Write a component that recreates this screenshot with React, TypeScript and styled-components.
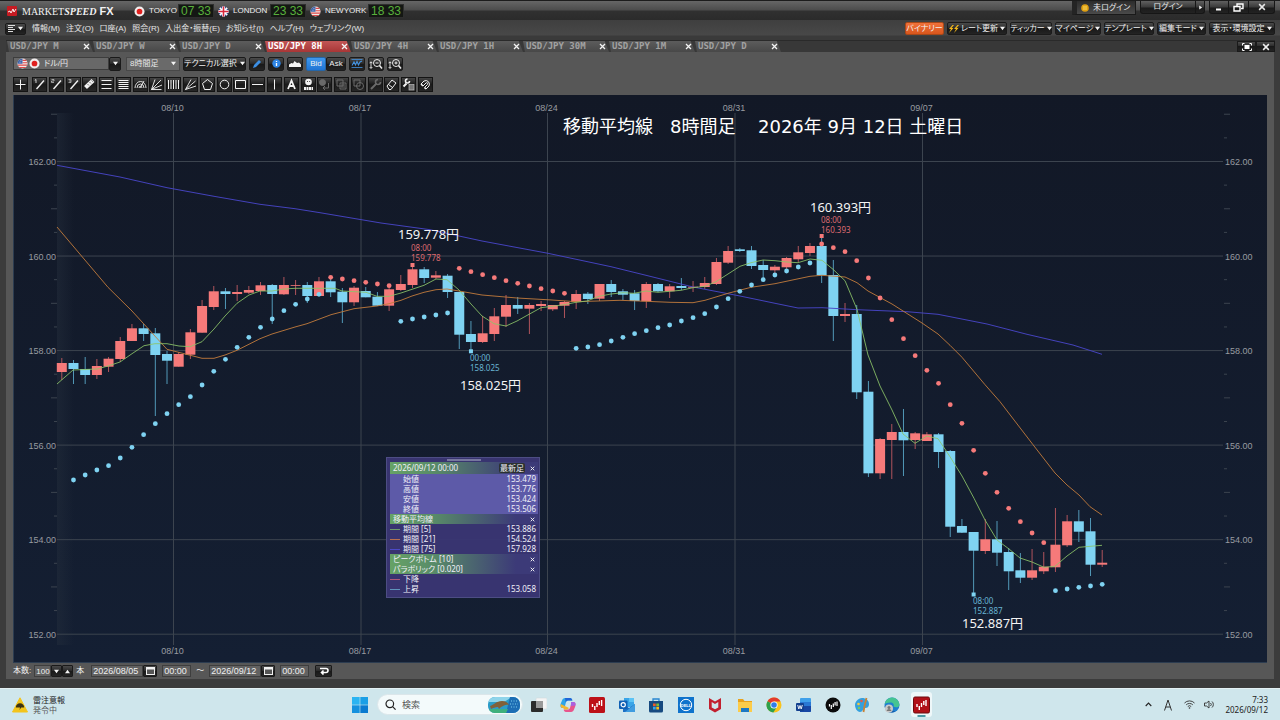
import React from "react";
import styled, { createGlobalStyle, css } from "styled-components";

const GlobalStyle = createGlobalStyle`
  * { box-sizing: border-box; }
  html, body { margin: 0; padding: 0; background: #2b2b2b; }
  body { font-family: "Noto Sans", "Noto Sans CJK JP", sans-serif; font-size: 8px; line-height: 10px; color: #e8e8e8; }
  button, input, select { font: inherit; color: inherit; margin: 0; padding: 0; border: 0; background: none; border-radius: 0; }
  button { cursor: pointer; }
  svg { display: block; flex: none; }
`;

const uiFont = css`
  font-family: "Liberation Sans", "Noto Sans CJK JP", sans-serif;
  font-feature-settings: "palt";
`;

const Screen = styled.div`
  display: flex;
  flex-direction: column;
  min-height: 100vh;
`;

const AppWindow = styled.main`
  ${uiFont}
  flex: 1;
  display: flex;
  flex-direction: column;
  background: #3c3c3c;
  white-space: nowrap;
`;

/* ---------- title bar ---------- */

const TitleBar = styled.header`
  height: 20px;
  display: flex;
  justify-content: space-between;
  align-items: flex-start;
  padding: 0 5px 0 7px;
  border-top: 1px solid #1c1c1c;
  background: linear-gradient(#666 0, #4c4c4c 9px, #303030 10px, #2b2b2b 19px);
`;

const Brand = styled.div`
  display: flex;
  align-items: center;
  height: 20px;
`;

const BrandName = styled.h1`
  width: 112px;
  margin: 0 0 0 5px;
  font: 10px/12px "Liberation Serif", serif;
  color: #f2f2f2;
  em { font-weight: 700; }
  strong { margin-left: 3px; font: 700 11px/12px "Liberation Sans", sans-serif; }
`;

const City = styled.div<{ $w: number }>`
  display: flex;
  align-items: center;
  width: ${(p) => p.$w}px;
  font: 8px/12px "Liberation Sans", sans-serif;
  color: #f0f0f0;
  svg { margin-right: 4px; }
`;

const Clock = styled.time`
  width: 36px;
  height: 14px;
  margin: 0 4px 0 auto;
  background: #141713;
  border: 1px solid #2e2e2e;
  color: #58b03c;
  font: 12px/12px "Liberation Sans", sans-serif;
  text-align: center;
`;

const TitleControls = styled.div`
  display: flex;
  gap: 4px;
`;

const LoginState = styled.div`
  display: flex;
  align-items: center;
  gap: 4px;
  width: 64px;
  height: 14px;
  padding-left: 4px;
  background: linear-gradient(#2c2c2c, #4a4a4a);
  border: 1px solid #1a1a1a;
  border-left: 5px solid #242424;
  border-top: 0;
`;

const GlossGroup = styled.div`
  display: flex;
  height: 13px;
  border: 1px solid #161616;
  border-top: 0;
  border-radius: 0 0 3px 3px;
  background: linear-gradient(#606060 0, #3a3a3a 6px, #1b1b1b 7px, #242424 13px);
`;

const GlossButton = styled.button<{ $w: number }>`
  display: flex;
  align-items: center;
  justify-content: center;
  width: ${(p) => p.$w}px;
  & + & { border-left: 1px solid #161616; }
`;

/* ---------- menu bar ---------- */

const MenuBar = styled.nav`
  height: 20px;
  display: flex;
  align-items: center;
  padding: 0 5px 3px 5px;
  background: linear-gradient(#3f3f3f, #484848 15px, #3a3a3a 16px);
`;

const darkButton = css`
  display: flex;
  align-items: center;
  justify-content: center;
  border: 1px solid #1a1a1a;
  border-radius: 2px;
  background: linear-gradient(#4a4a4a, #2c2c2c 45%, #181818 50%, #242424);
  color: #f0f0f0;
`;

const MainMenuButton = styled.button`
  ${darkButton}
  width: 21px;
  height: 12px;
  gap: 2px;
  margin-right: 6px;
`;

const MenuItem = styled.button`
  margin-right: 6px;
  color: #e6e6e6;
`;

const Actions = styled.div`
  display: flex;
  gap: 3px;
  margin-left: auto;
`;

const ActionButton = styled.button<{ $w: number; $hot?: boolean }>`
  ${darkButton}
  gap: 2px;
  width: ${(p) => p.$w}px;
  height: 13px;
  ${(p) => p.$hot && css`background: linear-gradient(#f0713a, #d9561c); border-color: #a84818;`}
`;

/* ---------- tabs ---------- */

const TabStrip = styled.div`
  height: 12px;
  display: flex;
  align-items: flex-end;
  margin: 0 5px 0 6px;
  padding-left: 1px;
  border-top: 1px solid #2a2a2a;
  background: #383838;
`;

const Tab = styled.div<{ $active?: boolean }>`
  display: flex;
  align-items: center;
  justify-content: space-between;
  width: 86px;
  height: 11px;
  padding: 0 3px;
  clip-path: polygon(0 0, 95% 0, 100% 100%, 2px 100%);
  background: ${(p) => (p.$active ? "linear-gradient(#c25656, #a83636)" : "linear-gradient(#5c5c5c, #484848)")};
  color: ${(p) => (p.$active ? "#fff" : "#a2a2a2")};
`;

const TabLabel = styled.button`
  font: 700 9px/11px "DejaVu Sans Mono", monospace;
`;

const TabClose = styled.button`
  display: flex;
  color: #f4f4f4;
`;

const PaneControls = styled.div`
  display: flex;
  margin-left: auto;
  button { ${darkButton} width: 19px; height: 11px; border-radius: 0; }
`;

/* ---------- content ---------- */

const Content = styled.section`
  flex: 1;
  display: flex;
  flex-direction: column;
  margin: 0 6px 9px;
  padding: 0 7px;
  background: #575757;
`;

const Toolbar = styled.div`
  height: 23px;
  display: flex;
  align-items: center;
  gap: 3px;
`;

const PairBox = styled.label`
  display: flex;
  align-items: center;
  gap: 1px;
  width: 96px;
  height: 13px;
  padding-left: 3px;
  border: 1px solid #3d3d3d;
  background: #686868;
`;

const PlainSelect = styled.select`
  appearance: none;
  flex: 1;
  padding-left: 3px;
  line-height: 11px;
  outline: none;
`;

const FrameBox = styled.label`
  display: flex;
  align-items: center;
  width: 54px;
  height: 14px;
  margin-left: 2px;
  padding-right: 3px;
  border: 1px solid #484848;
  background: #6a6a6a;
`;

const Button = styled.button<{ $w?: number; $on?: boolean }>`
  ${darkButton}
  gap: 3px;
  width: ${(p) => p.$w ?? 16}px;
  height: 14px;
  ${(p) => p.$on && css`background: linear-gradient(#3f98ee, #1f74d4); border-color: #2566a8;`}
`;

const Segment = styled.div`
  display: flex;
`;

const DrawBar = styled.div`
  height: 20px;
  display: flex;
  align-items: center;
  gap: 4px;
  padding-bottom: 1px;
`;

const DrawGroup = styled.div`
  display: flex;
  justify-content: space-between;
  width: 401px;
`;

const ToolButton = styled.button<{ $dim?: boolean }>`
  display: flex;
  align-items: center;
  justify-content: center;
  width: 15px;
  height: 15px;
  border: 1px solid #141414;
  background: linear-gradient(#454545, #1a1a1a 50%, #262626);
  color: ${(p) => (p.$dim ? "#6a6a6a" : "#f2f2f2")};
`;

const ChartPanel = styled.div`
  position: relative;
  flex: 1;
  display: flex;
  background: linear-gradient(#121826, #141f33);
  border-left: 1px solid #2c3c50;
  border-bottom: 1px solid #2c3c50;
  svg.chart { flex: 1; min-width: 0; width: 100%; height: auto; }
`;

const FooterBar = styled.form`
  height: 16px;
  display: flex;
  align-items: center;
  color: #f0f0f0;
`;

const Field = styled.input<{ $w: number; $small?: boolean }>`
  width: ${(p) => p.$w}px;
  height: 12px;
  padding-left: 1px;
  border: 1px solid #3e3e3e;
  background: #626262;
  font: ${(p) => (p.$small ? 8 : 9)}px/10px "Liberation Sans", sans-serif;
  outline: none;
`;

const SmallButton = styled.button<{ $w: number }>`
  ${darkButton}
  width: ${(p) => p.$w}px;
  height: 12px;
  border-radius: 1px;
`;

const Gap = styled.span<{ $l?: number; $r?: number }>`
  margin: 0 ${(p) => p.$r ?? 0}px 0 ${(p) => p.$l ?? 0}px;
`;

/* ---------- floating data window ---------- */

const DataWindow = styled.aside`
  position: absolute;
  left: 372px;
  top: 362px;
  width: 154px;
  padding: 1px 1px 3px 3px;
  border: 1px solid #4d4d84;
  background: rgba(58, 54, 116, 0.95);
  color: #f0f0f8;
  font: 8px/10px "Noto Sans", "Noto Sans CJK JP", sans-serif;
  font-feature-settings: "palt";
`;

const Handle = styled.div`
  width: 34px;
  height: 2px;
  margin: 0 auto 1px;
  background: #77779f;
`;

const DataTable = styled.table`
  width: 100%;
  border-collapse: collapse;
  th, td { padding: 0; height: 10px; font-weight: 400; text-align: left; }
  td:last-child { text-align: right; padding-right: 2px; }
`;

const SectionRow = styled.tr<{ $h?: number }>`
  background: linear-gradient(90deg, #66a266 0, #588b68 30%, #3c3a78 85%);
  th { height: ${(p) => p.$h ?? 10}px; }
`;

const SectionHead = styled.div`
  display: flex;
  align-items: center;
  justify-content: space-between;
  padding: 0 3px;
`;

const Latest = styled.span`
  margin: 0 5px 0 auto;
  padding: 0 1px;
  border-radius: 2px;
  background: #2c3230;
`;

const PriceRow = styled.tr<{ $lit?: boolean }>`
  background: ${(p) => (p.$lit ? "#5d5aa8" : "transparent")};
`;

const Swatch = styled.span<{ $c: string }>`
  display: block;
  width: 10px;
  height: 1px;
  background: ${(p) => p.$c};
`;

/* ---------- task bar ---------- */

const TaskBar = styled.footer`
  height: 32px;
  display: grid;
  grid-template-columns: 1fr auto 1fr;
  align-items: center;
  padding: 0 12px;
  border-top: 1px solid #e4f1f4;
  background: #cfe6ec;
  color: #222;
  white-space: nowrap;
`;

const Weather = styled.div`
  display: flex;
  align-items: center;
  gap: 5px;
  small { display: block; font-size: 8px; color: #555; }
`;

const TaskCenter = styled.div`
  display: flex;
  align-items: center;
  margin-left: 4px;
`;

const SearchBox = styled.label`
  display: flex;
  align-items: center;
  gap: 6px;
  width: 146px;
  height: 21px;
  margin: 0 5px 0 9px;
  padding: 0 2px 0 7px;
  border: 1px solid #dbe6ea;
  border-radius: 11px;
  background: #f3fafb;
  input { flex: 1; min-width: 0; font-size: 9px; outline: none; }
  input::placeholder { color: #555; opacity: 1; }
`;

const TaskIcons = styled.div`
  display: flex;
  justify-content: space-between;
  width: 404px;
`;

const TaskButton = styled.button<{ $active?: boolean }>`
  display: flex;
  flex-direction: column;
  align-items: center;
  justify-content: center;
  width: 21px;
  height: 25px;
  border-radius: 3px;
  background: ${(p) => (p.$active ? "#eef7f9" : "transparent")};
`;

const Tray = styled.div`
  display: flex;
  align-items: center;
  justify-content: flex-end;
  gap: 9px;
`;

const TrayClock = styled.time`
  margin-left: 2px;
  text-align: right;
  font: 8px/10px "Noto Sans", sans-serif;
`;

/* ---------- chart data ---------- */

type Candle = [kind: "u" | "d", high: number, top: number, bottom: number, low: number];

const candles: Candle[] = [
  ["u", 358, 363, 372, 380], ["d", 360, 363, 369, 384], ["d", 357, 369, 375, 384], ["u", 359, 366, 375, 379],
  ["u", 357, 358.7, 366.7, 372], ["u", 337, 341, 359, 362], ["u", 324, 328.3, 341, 341], ["d", 324, 328.3, 334, 341],
  ["d", 328, 333.3, 355, 416], ["d", 351, 354, 360.7, 384], ["u", 352, 354, 366.7, 366.7], ["u", 329, 332.3, 354.7, 359],
  ["u", 300, 306, 332.7, 332.7], ["u", 286, 291.3, 307, 310], ["d", 288, 291.3, 294, 309], ["u", 285, 292, 294, 301],
  ["u", 286, 290, 292.7, 294], ["u", 282, 285.3, 291, 295], ["d", 284, 285, 294, 324], ["u", 277, 285, 294.3, 295],
  ["u", 280, 285, 285.8, 295], ["d", 282, 285, 296, 303], ["u", 277, 281.3, 296, 296], ["d", 278, 281.3, 292.3, 297],
  ["d", 288, 291.7, 302.3, 323], ["u", 286, 287.7, 302.3, 306], ["d", 287, 291, 297.3, 297.3], ["d", 292, 296.7, 305.7, 306],
  ["u", 287, 289.3, 305.7, 311], ["u", 275, 284, 290, 291], ["u", 263, 269.3, 285, 288], ["d", 267, 269.3, 278, 283],
  ["u", 271, 275.3, 277.7, 279], ["d", 274, 275.7, 292, 298], ["d", 292, 292, 334.7, 349], ["d", 321, 334, 342, 350],
  ["u", 316, 333.3, 342, 343], ["u", 308, 316.3, 334, 341], ["u", 295, 305, 316.7, 327], ["d", 297, 305, 308.7, 314],
  ["u", 303, 305, 308.7, 334], ["u", 301, 304, 306, 311], ["u", 305, 305, 309.3, 311], ["u", 301, 302, 305.7, 318],
  ["u", 290, 294, 302, 309], ["d", 292, 293.7, 299, 304], ["u", 284, 284, 298.7, 301], ["d", 280, 284, 292, 297],
  ["d", 289, 291.3, 294.7, 300], ["d", 290, 293.3, 301, 310], ["u", 282, 284, 301.3, 308], ["d", 283, 284, 291.3, 292],
  ["u", 284, 286.3, 291.3, 298], ["d", 278, 286, 288, 290], ["u", 281, 286.7, 287.7, 292], ["u", 277, 283, 287, 289],
  ["u", 258, 262, 284, 285], ["u", 246, 251, 262.7, 264], ["d", 248, 249.3, 251, 252], ["d", 246, 250.3, 266, 269],
  ["d", 260, 265, 270, 279], ["u", 265, 266.7, 270.3, 273], ["u", 257, 258, 267.3, 271], ["u", 246, 252.3, 259.3, 262],
  ["u", 243, 246, 253, 256], ["d", 237, 246, 275.3, 283], ["d", 260, 275, 316, 341], ["u", 303, 314, 316, 322],
  ["d", 305, 314, 392.3, 399], ["d", 381, 391.7, 473.3, 477], ["u", 438, 439, 473.3, 479], ["u", 424, 432, 440, 479],
  ["d", 409, 432, 440.3, 476], ["u", 432, 433.3, 440, 449], ["u", 432, 434.3, 441, 441], ["d", 433, 434.3, 452, 468],
  ["d", 450, 451, 526.7, 537], ["d", 519, 526, 532.7, 533], ["d", 532, 532, 550.7, 593], ["u", 519, 539.3, 551, 554],
  ["d", 521, 539.3, 552.7, 566], ["d", 548, 552, 571.3, 590], ["d", 553, 570.3, 577.7, 583], ["u", 549, 570.3, 577.7, 580],
  ["u", 552, 566.7, 571.3, 574], ["u", 508, 544.7, 567.3, 572], ["u", 515, 521.3, 545.3, 547], ["d", 510, 521.3, 531.7, 542],
  ["d", 518, 531.3, 564.7, 576], ["u", 550, 562.7, 564.7, 567],
];

type SarRun = { from: number; side: "u" | "d"; ys: number[] };

const parabolic: SarRun[] = [
  { from: 1, side: "d", ys: [480, 475, 470, 465.7, 458, 447.3, 434.7, 423.7, 413.7, 404.7, 396.7, 385, 371.3, 359.3, 347.3, 337.3, 327.3, 319, 310.7, 304.3, 299, 294.3] },
  { from: 23, side: "u", ys: [277.3, 279, 280.7, 282.3, 284, 285.7] },
  { from: 29, side: "d", ys: [321.3, 319, 317, 315, 313] },
  { from: 34, side: "u", ys: [268.3, 271.7, 274.7, 277.7, 280.7, 283.3, 286, 288.7, 291, 293.3] },
  { from: 44, side: "d", ys: [348.3, 347, 344.7, 341, 337.3, 333.7, 330.7, 327.7, 325, 321, 317.7, 313.7, 307, 298.7, 291.3, 285, 279.7, 275, 271, 267, 263] },
  { from: 65, side: "u", ys: [244, 247.7, 251.7, 260.7, 278, 298, 319.7, 338.7, 355.7, 370.3, 383.3, 404.7, 423.3, 450.3, 473.3, 492.3, 508.3, 521.7, 533, 542.7] },
  { from: 85, side: "d", ys: [590.7, 589, 587.3, 586, 584.3] },
];

const ma5 =
  "57,384 73,370 97,369 108,366 120,362 132,353.7 144,345.7 155,343.7 167,343.7 179,346 190,346.7 202,341.7 214,329 225,316 237,303.3 249,295 260,291 272,291 284,289 295,288.3 335,288.3 342,291 366,292.3 377,296.3 389,296.3 401,293 412,289.3 424,285.3 436,279 447,279.7 459,290 471,304 482,316 494,323.7 506,326 517,321 529,314.3 541,307.7 552,306.3 564,304.7 576,302.3 587,301 599,296.3 611,294 623,292.7 634,293.3 646,291 658,292.3 681,290.3 693,287.7 705,286.3 716,281.7 728,274 740,266.3 751,262.7 763,260 775,260.7 787,262 798,262.7 810,259 822,260.3 833,269.3 845,280.7 857,309.3 868,355 880,386 892,410 903,434 915,443.3 927,436 938,438.7 950,456.7 962,476 974,498.3 985,520 997,540 1009,549 1020,558 1032,562 1044,567.3 1055,566.3 1067,556 1079,547.3 1102,545.3";
const ma21 =
  "57,227 108,287.3 132,311 167,349.3 202,358.3 214,358.3 225,355 237,350.3 260,338.7 272,334 295,327 307,323.7 331,314.7 354,308.7 377,306 389,303.7 401,300.3 412,296 424,292.3 436,289.7 447,289 459,291 482,295 517,298 552,300 576,301.7 620,300.3 646,301.3 670,302.3 693,302.7 705,300.3 728,293.3 751,287.3 775,283.7 810,276.3 822,275.3 845,277 857,282.7 868,291 892,304 922,323 938,334 950,345.3 962,357.3 985,384.7 1000,401.7 1033,444.7 1055,473 1067,485 1079,495 1090,506.7 1102,515";
const ma75 =
  "57,165.3 120,177 167,187.7 214,196.3 260,204.3 295,208.7 320,212.7 381,223 430,229.7 482,241 548,253.3 611,266.7 646,275.3 693,287 740,296 775,303.3 798,308 822,307.7 857,309.7 907,311.7 938,314.3 987,324 1027,334.3 1073,345 1102,354.3";

const weeks: [string, number][] = [["08/10", 173.5], ["08/17", 361], ["08/24", 547.5], ["08/31", 735], ["09/07", 922.5]];

const priceY = (p: number) => 161.5 + (162 - p) * 47.27;
const candleX = (i: number) => 61.8 + i * 11.69;
const prices = [162, 160, 158, 156, 154, 152];
const ticks = Array.from({ length: 22 }, (_, i) => 163 - i * 0.5).filter((p) => p % 2 !== 0 && p > 152);

const body = { u: "#f67a7a", d: "#7fd3f2" };
const wick = { u: "#b0545c", d: "#5299b8" };

const extremes = [
  { i: 30, y: 265, kind: "u", tx: 411, ty: 251, time: "08:00", price: "159.778", nx: 398, ny: 239 },
  { i: 35, y: 351.3, kind: "d", tx: 470, ty: 361, time: "00:00", price: "158.025", nx: 460, ny: 390 },
  { i: 65, y: 236, kind: "u", tx: 821, ty: 223, time: "08:00", price: "160.393", nx: 810, ny: 212 },
  { i: 78, y: 594.5, kind: "d", tx: 973, ty: 604, time: "08:00", price: "152.887", nx: 962, ny: 628 },
] as const;

const noto = '"Noto Sans", "Noto Sans CJK JP", sans-serif';
const wide = '"DejaVu Sans", "Noto Sans CJK JP", sans-serif';
const axis = { fill: "#989ba0", fontSize: 9, fontFamily: '"Liberation Sans", sans-serif' };

function Chart() {
  return (
    <svg className="chart" viewBox="14 95 1253 567" role="img" aria-label="USD/JPY 8H">
      <defs>
        <linearGradient id="edge"><stop offset="0" stopColor="#26303e" stopOpacity=".45" /><stop offset="1" stopColor="#26303e" stopOpacity="0" /></linearGradient>
      </defs>
      <rect x="57" y="113" width="17" height="532" fill="url(#edge)" />
      <g stroke="#3c444f">
        {prices.map((p) => <line key={p} x1="57" x2="1223" y1={priceY(p)} y2={priceY(p)} />)}
        {weeks.map(([d, x]) => <line key={d} x1={x} x2={x} y1="113" y2="645" />)}
        {ticks.map((p) => {
          const len = p % 1 === 0 ? 6 : 3;
          return (
            <g key={p}>
              <line x1={57 - len} x2="57" y1={priceY(p)} y2={priceY(p)} />
              <line x1="1224" x2={1224 + len} y1={priceY(p)} y2={priceY(p)} />
            </g>
          );
        })}
      </g>
      <g {...axis}>
        {prices.map((p) => (
          <g key={p}>
            <text x="56" y={priceY(p) + 3.5} textAnchor="end">{p.toFixed(2)}</text>
            <text x="1225" y={priceY(p) + 3.5}>{p.toFixed(2)}</text>
          </g>
        ))}
        {weeks.map(([d, x]) => (
          <g key={d} textAnchor="middle">
            <text x={x - 1} y="111">{d}</text>
            <text x={x - 1} y="654">{d}</text>
          </g>
        ))}
      </g>
      {candles.map(([k, h, t, b, l], i) => (
        <g key={i}>
          <line x1={candleX(i)} x2={candleX(i)} y1={h} y2={l} stroke={wick[k]} />
          <rect x={candleX(i) - 5} y={t} width="10" height={b - t} fill={body[k]} />
        </g>
      ))}
      <polyline points={ma75} fill="none" stroke="#4745c4" strokeOpacity=".95" />
      <polyline points={ma21} fill="none" stroke="#c27b3c" strokeOpacity=".9" />
      <polyline points={ma5} fill="none" stroke="#8cc468" strokeOpacity=".85" />
      {parabolic.map((run) =>
        run.ys.map((y, n) => <circle key={run.from + n} cx={candleX(run.from + n)} cy={y} r="2.4" fill={body[run.side]} />)
      )}
      {extremes.map((e) => (
        <g key={e.price} fontFamily={noto}>
          <rect x={candleX(e.i) - 2} y={e.y - 2} width="4" height="4" fill={body[e.kind]} />
          <g fontSize="8" fill={e.kind === "u" ? "#dd6a70" : "#68b4d2"}>
            <text x={e.tx} y={e.ty}>{e.time}</text>
            <text x={e.tx} y={e.ty + 10}>{e.price}</text>
          </g>
          <text x={e.nx} y={e.ny} fontSize="13" fill="#f4f4f4">{e.price}円</text>
        </g>
      ))}
      <g fontFamily={wide} fontSize="18" fill="#fff">
        <text x="563" y="133">移動平均線</text>
        <text x="670" y="133">8時間足</text>
        <text x="758" y="133">2026年 9月 12日 土曜日</text>
      </g>
    </svg>
  );
}

/* ---------- icons ---------- */

const Caret = ({ up, right }: { up?: boolean; right?: boolean }) => (
  <svg width="5" height="5" viewBox="0 0 6 5" fill="#f4f4f4" aria-hidden>
    <path d={up ? "M0 4.5h6L3 .5z" : right ? "M1.5 0v5L5 2.5z" : "M0 .5h6L3 4.5z"} />
  </svg>
);

const Cross = ({ s = 7 }: { s?: number }) => (
  <svg width={s} height={s} viewBox="0 0 7 7" stroke="currentColor" strokeWidth="1.3" aria-hidden><path d="M1 1l5 5M6 1L1 6" /></svg>
);

const FlagJP = () => (
  <svg width="11" height="11" viewBox="0 0 12 12" aria-hidden><circle cx="6" cy="6" r="5.5" fill="#f1eded" /><circle cx="6" cy="6" r="3.1" fill="#e0201f" /></svg>
);
const FlagUK = () => (
  <svg width="11" height="11" viewBox="0 0 12 12" aria-hidden>
    <circle cx="6" cy="6" r="5.5" fill="#324f9a" />
    <path d="M2 2l8 8M10 2l-8 8" stroke="#fff" strokeWidth="1.8" />
    <path d="M6 .5v11M.5 6h11" stroke="#fff" strokeWidth="3.2" />
    <path d="M6 .5v11M.5 6h11" stroke="#d8283c" strokeWidth="1.7" />
  </svg>
);
const FlagUS = () => (
  <svg width="11" height="11" viewBox="0 0 12 12" aria-hidden>
    <circle cx="6" cy="6" r="5.5" fill="#f3e9e9" />
    <path d="M6 2.6h4.2M6 5.2h5.2M1 7.8h10M2.6 10.3h6.8" stroke="#dc4a4a" strokeWidth="1.2" />
    <path d="M6 .5A5.5 5.5 0 0 0 .5 6.4H6z" fill="#3f64a8" />
    <path d="M2.2 4.6h3M3.4 2.7h2" stroke="#b9c9e6" strokeWidth=".7" strokeDasharray=".8 .6" />
  </svg>
);

const TitleLogo = () => (
  <svg width="10" height="10" viewBox="0 0 10 10" aria-hidden>
    <rect width="10" height="10" rx="1" fill="#c51b22" />
    <path d="M1 6l2-1 1 2 2-4 1 3 2-3" fill="none" stroke="#fff" strokeWidth=".9" />
  </svg>
);

const Glyph = ({ children }: { children: React.ReactNode }) => (
  <svg width="13" height="13" viewBox="0 0 13 13" fill="none" stroke="currentColor" strokeWidth="1" aria-hidden>{children}</svg>
);

const tools: { name: string; dim?: boolean; art: React.ReactNode }[] = [
  { name: "線1", art: <><path d="M3.500 11L11 2.500" strokeWidth="1.4" /><path d="M1.800 2.300l1.200-.8v3.500" strokeWidth=".8" /></> },
  { name: "線2", art: <><path d="M3.500 11L11 2.500" strokeWidth="1.4" /><path d="M1.500 1.500h2.500v1.500h-2.500v1.500h2.500" strokeWidth=".7" opacity=".8" /></> },
  { name: "線3", art: <><path d="M3.500 11L11 2.500" strokeWidth="1.4" /><path d="M1.500 1.500h2.500v3h-2.500M2 3h2" strokeWidth=".7" opacity=".8" /></> },
  { name: "チャネル", art: <><path d="M2.500 9.500L10 2.500" strokeWidth="4.200" /><path d="M4.500 6l1.500 1.500M6.500 4l1.500 1.500M8.500 2.500l1.200 1.200" stroke="#444" strokeWidth=".7" /></> },
  { name: "水平三本", art: <path d="M1.500 2.500h10M1.500 6.500h10M1.500 10.500h10" /> },
  { name: "水平五本", art: <path d="M1.500 2.500h10M1.500 4.500h10M1.500 6.500h10M1.500 8.500h10M1.500 10.500h10" /> },
  { name: "アーク", art: <><path d="M1 10a5.500 6.500 0 0 1 11 0M3 10a3.500 4 0 0 1 7 0M5 10a1.500 1.800 0 0 1 3 0" strokeWidth=".9" /><path d="M6 10l4-7" strokeWidth=".9" /></> },
  { name: "ファン", art: <path d="M1.500 11.500L5 1.500M1.500 11.500L11 2M1.500 11.500L12 7M1.500 11.500h10" strokeWidth=".9" /> },
  { name: "垂直線群", art: <path d="M1.500 2v9M4 2v9M6.500 2v9M9 2v9M11.500 2v9" /> },
  { name: "角度", art: <path d="M1.500 11.500L7 1.500M1.500 11.500L11.500 3M1.500 11.500L12 8" strokeWidth=".9" /> },
  { name: "五角形", art: <path d="M6.500 1.500l5 4-2 6h-6l-2-6z" /> },
  { name: "円", art: <circle cx="6.500" cy="6.500" r="4.300" /> },
  { name: "四角形", art: <path d="M1.500 2.500h10v8h-10z" /> },
  { name: "水平線", art: <path d="M1 6.500h11" /> },
  { name: "垂直線", art: <path d="M6.500 1.500v10" /> },
  { name: "文字", art: <path d="M3 11l3.500-8.500L10 11M4.300 8h4.400" strokeWidth="1.800" /> },
  { name: "アイコン", art: <><circle cx="6.500" cy="4" r="3.300" fill="currentColor" stroke="none" /><path d="M5 3.500h.8M7.300 3.500h.8" stroke="#222" /><path d="M2 10.500h9" strokeWidth="2.800" strokeDasharray="2 .5" /></> },
  { name: "色", dim: true, art: <><circle cx="4.500" cy="4.500" r="3" fill="currentColor" /><path d="M10.500 5v5h-5M7 8l-2 2 2 2" /></> },
  { name: "複製", dim: true, art: <><path d="M2 2h6v6H2zM5 5h6v6H5z" /><path d="M6 7h4M6 9h4" /></> },
  { name: "重ね", dim: true, art: <><path d="M2 2h6v6H2z" /><circle cx="8" cy="8" r="3.500" /></> },
  { name: "工具", dim: true, art: <><path d="M2 11l5.500-5.500" strokeWidth="2" /><path d="M11.500 4a2.500 2.500 0 1 1-2.500-2.500" strokeWidth="1.600" /></> },
  { name: "消しゴム", art: <path d="M2 8l5-6 4 3-5 6.500H4zM3.500 6.500l4 3" /> },
  { name: "設定", art: <><path d="M1.500 8.500L4.500 5.500" strokeWidth="2" /><path d="M7.500 3a2 2 0 1 1-2-2" strokeWidth="1.600" /><rect x="7" y="6.500" width="5" height="5.500" fill="#777" stroke="#bbb" strokeWidth=".7" /></> },
  { name: "磁石", art: <><path d="M2 6l3-3a3.700 3.700 0 0 1 5 5l-3 3M4 8l3-3a1 1 0 0 1 1.500 1.500l-3 3" strokeWidth="1" /><path d="M2 6l2 2M5.500 9.500l1.500 1.500" strokeWidth="1.600" /></> },
];

const taskIcons: { name: string; art: React.ReactNode }[] = [
  { name: "タスク ビュー", art: <><rect x="5" y="1" width="11" height="11" rx="1" fill="#f4f4f4" stroke="#cdd5d8" strokeWidth=".5" /><rect x="0" y="4" width="12" height="11" rx="1" fill="#2b2b2b" /><path d="M5 4h7v7H5z" fill="#999" /></> },
  { name: "Copilot", art: <><path d="M5 1h5c1.500 0 2 1 2.400 2.500H8C6.500 3.500 6 5 5.500 7L4.500 11H3C.5 11 0 9 .8 6.500L2 3.500C2.500 2 3.500 1 5 1z" fill="#2da5e8" /><path d="M5 1h5c1.500 0 2 1 2.400 2.500H8c-1 0-2 .8-2.300 2z" fill="#2165d6" /><path d="M11 15H6c-1.500 0-2-1-2.400-2.500H8c1.500 0 2-1.500 2.500-3.500l1-4H13c2.500 0 3 2 2.200 4.500L14 12.500c-.5 1.500-1.500 2.500-3 2.500z" fill="#e8558c" /><path d="M.8 7c-.6 3 .2 4 2.200 4l1.500 1.500h3L9 11z" fill="#f2b632" /><path d="M11 5h2c2 0 3 1 2.400 3.500L11 9z" fill="#a962e0" /></> },
  { name: "MARKETSPEED", art: <><rect width="16" height="16" rx="1.500" fill="#bd1118" /><path d="M3.500 7v3M5.800 9v4M8 6v4M10.300 4v4M12.600 3v6" stroke="#fff" strokeWidth="1.400" /></> },
  { name: "Outlook", art: <><rect x="5" y="1" width="10" height="9" fill="#39a5e8" /><path d="M10 1h5v4h-5z" fill="#5bc3f5" /><path d="M4 7l6 4 6-4v8H4z" fill="#1b6fc4" /><path d="M16 7v8H6z" fill="#3f9ce0" /><rect x="0" y="3.500" width="8.500" height="8.500" rx="1" fill="#0f5fb4" /><circle cx="4.200" cy="7.700" r="2.100" fill="none" stroke="#fff" strokeWidth="1.200" /></> },
  { name: "Store", art: <><path d="M5 5V2h6v3" fill="none" stroke="#2a86d0" strokeWidth="1.300" /><path d="M1 4h14v10a1.500 1.500 0 0 1-1.500 1.500h-11A1.500 1.500 0 0 1 1 14z" fill="#174a80" /><path d="M5 6.500h2.700v2.700H5z" fill="#f05a28" /><path d="M8.300 6.500H11v2.700H8.300z" fill="#7fba3a" /><path d="M5 9.800h2.700v2.700H5z" fill="#35a8e8" /><path d="M8.300 9.800H11v2.700H8.300z" fill="#fbbc1a" /></> },
  { name: "Dell", art: <><rect width="16" height="16" fill="#0f73cc" /><circle cx="8" cy="8" r="5.700" fill="none" stroke="#fff" strokeWidth="1" /><text x="8" y="9.600" fontSize="4" fontWeight="700" fontFamily="Liberation Sans, sans-serif" fill="#fff" textAnchor="middle">DELL</text></> },
  { name: "McAfee", art: <path d="M2 1l6 3.500L14 1v11l-6 3.500L2 12zM4.700 5v5.500L8 12.300l3.300-1.800V5L8 7z" fill="#c2202f" fillRule="evenodd" /> },
  { name: "エクスプローラー", art: <><path d="M1 2h5l1.500 2H15v11H1z" fill="#e9a21d" /><path d="M1 5h14v10H1z" fill="#fccc4a" /><path d="M4 15v-4h8v4z" fill="#1c78c4" /></> },
  { name: "Chrome", art: <><circle cx="8" cy="8" r="7.500" fill="#f9c31c" /><path d="M8 8L1.500 4.200A7.500 7.500 0 0 1 14.500 4.500H8z" fill="#e33b2e" /><path d="M8 8L1.500 4.200A7.500 7.500 0 0 0 7.300 15.500L11 9.800z" fill="#2da04e" /><circle cx="8" cy="8" r="3.600" fill="#fff" /><circle cx="8" cy="8" r="2.800" fill="#2f7de8" /></> },
  { name: "Word", art: <><rect x="4" y="1" width="11" height="14" rx="1" fill="#3fa0ea" /><path d="M4 5h11v4H4z" fill="#2a78d4" /><path d="M4 9h11v5a1 1 0 0 1-1 1H4z" fill="#1746a4" /><rect x="0" y="6" width="8" height="8" rx="1" fill="#12408f" /><path d="M1.700 8l1.100 4L4 8.500 5.200 12l1.100-4" fill="none" stroke="#fff" strokeWidth=".9" /></> },
  { name: "MARKETSPEED II", art: <><circle cx="8" cy="8" r="7.500" fill="#0c0c0c" /><path d="M4.500 7v2.500M6.300 8v4M8.300 6.500V10M10.100 5v3.500M12 4.500V9" stroke="#fff" strokeWidth="1.200" /></> },
  { name: "ペイント", art: <><path d="M8 1c4 0 7 2.500 7 6s-2 4-4 4-2 4-5 4C3 15 1 11 1 8s3-7 7-7z" fill="#35a0de" /><circle cx="4.500" cy="7" r="1.300" fill="#f6c93a" /><circle cx="7.500" cy="4" r="1.300" fill="#e45b4a" /><circle cx="5" cy="11" r="1.300" fill="#7cc65c" /><path d="M12.500 1l-2 8-1 6" stroke="#c98336" strokeWidth="1.800" fill="none" /></> },
  { name: "Edge", art: <><circle cx="8" cy="8" r="7.500" fill="#1d7fd0" /><path d="M.6 7A7.500 7.500 0 0 1 15.500 7.500c0 3-4 3.500-6 2 1-2-.5-4-3-4S1.500 6.500.6 7z" fill="#45c492" /><path d="M5 8c-1 4 3 7 7 6-5 3.500-11 1-11.400-5z" fill="#165ba8" /><circle cx="5" cy="11.500" r="4" fill="#c9c9c9" /><circle cx="5" cy="10.500" r="1.500" fill="#777" /><path d="M2.500 14a2.600 2.600 0 0 1 5 0z" fill="#777" /></> },
];

const menus = ["情報(M)", "注文(O)", "口座(A)", "照会(R)", "入出金・振替(E)", "お知らせ(I)", "ヘルプ(H)", "ウェブリンク(W)"];
const tabs = ["USD/JPY M", "USD/JPY W", "USD/JPY D", "USD/JPY 8H", "USD/JPY 4H", "USD/JPY 1H", "USD/JPY 30M", "USD/JPY 1M", "USD/JPY D"];
const actions: [string, number][] = [["ティッカー", 42], ["マイページ", 46], ["テンプレート", 50], ["編集モード", 49], ["表示・環境設定", 66]];
const ohlc: [string, string][] = [["始値", "153.479"], ["高値", "153.776"], ["安値", "153.424"], ["終値", "153.506"]];
const averages: [string, string, string][] = [["#6f9a6c", "期間 [5]", "153.886"], ["#b87050", "期間 [21]", "154.524"], ["#4c49c8", "期間 [75]", "157.928"]];
const sar: [string, string, string][] = [["#b05878", "下降", ""], ["#5f94bc", "上昇", "153.058"]];

const LabeledRow = ({ c, label, value }: { c: string; label: string; value: string }) => (
  <PriceRow><td><Swatch $c={c} /></td><th scope="row">{label}</th><td>{value}</td></PriceRow>
);

const Section = ({ title, latest, h }: { title: string; latest?: boolean; h?: number }) => (
  <SectionRow $h={h}>
    <th colSpan={3}>
      <SectionHead>{title}{latest && <Latest>最新足</Latest>}<TabClose type="button" aria-label="閉じる"><Cross s={5} /></TabClose></SectionHead>
    </th>
  </SectionRow>
);

const CalendarIcon = () => (
  <svg width="9" height="8" viewBox="0 0 9 8" aria-hidden><rect x=".5" y=".5" width="8" height="7" fill="#555" stroke="#f0f0f0" /><path d="M0 1.500h9" stroke="#f0f0f0" strokeWidth="2" /></svg>
);

const Magnifier = ({ plus }: { plus?: boolean }) => (
  <svg width="14" height="12" viewBox="0 0 14 12" fill="none" stroke="#eee" aria-hidden>
    <path d="M2 4v6M.7 5.200L2 3.700l1.300 1.500M.7 9L2 10.500 3.300 9" strokeWidth=".9" />
    <circle cx="8" cy="5" r="3.500" /><path d="M10.500 7.500L13 10.500" strokeWidth="1.500" /><path d={plus ? "M6.500 5h3M8 3.500v3" : "M6.500 5h3"} />
  </svg>
);

export default function App() {
  return (
    <Screen>
      <GlobalStyle />
      <AppWindow>
        <TitleBar>
          <Brand>
            <TitleLogo />
            <BrandName>MARKET<em>SPEED</em><strong>FX</strong></BrandName>
            <City $w={84}><FlagJP />TOKYO<Clock>07 33</Clock></City>
            <City $w={92}><FlagUK />LONDON<Clock>23 33</Clock></City>
            <City $w={98}><FlagUS />NEWYORK<Clock>18 33</Clock></City>
          </Brand>
          <TitleControls>
            <LoginState>
              <svg width="8" height="8" viewBox="0 0 8 8" aria-hidden><circle cx="4" cy="4" r="3.800" fill="#e0a012" /><path d="M3 2v4M5 2v4" stroke="#f8d860" /></svg>
              未ログイン
            </LoginState>
            <GlossGroup>
              <GlossButton $w={54}>ログイン</GlossButton>
              <GlossButton $w={9} aria-label="ログインメニュー"><Caret right /></GlossButton>
            </GlossGroup>
            <GlossGroup>
              <GlossButton $w={18} aria-label="最小化"><svg width="6" height="8" viewBox="0 0 6 8" aria-hidden><path d="M0 6.500h5" stroke="#fff" strokeWidth="2" /></svg></GlossButton>
              <GlossButton $w={20} aria-label="元に戻す"><svg width="11" height="9" viewBox="0 0 11 9" fill="none" stroke="#fff" aria-hidden><path d="M4 3V1h6v4.500H8M1 3.500h6V8H1z" strokeWidth="1.400" /></svg></GlossButton>
              <GlossButton $w={26} aria-label="閉じる"><Cross s={8} /></GlossButton>
            </GlossGroup>
          </TitleControls>
        </TitleBar>

        <MenuBar>
          <MainMenuButton aria-label="メニュー">
            <svg width="8" height="7" viewBox="0 0 8 7" stroke="#ddd" aria-hidden><path d="M0 .5h7M0 2.500h5M0 4.500h7M0 6.500h5" /></svg>
            <Caret />
          </MainMenuButton>
          {menus.map((m) => <MenuItem key={m}>{m}</MenuItem>)}
          <Actions>
            <ActionButton $w={39} $hot>バイナリー</ActionButton>
            <ActionButton $w={60}>
              <svg width="10" height="8" viewBox="0 0 10 8" fill="#f2b81d" aria-hidden><path d="M3.500 0L0 4h2L0 8l4.500-5h-2L5 0zM8.500 0L5 4h2L5 8l4.500-5h-2L10 0z" /></svg>
              レート更新<Caret />
            </ActionButton>
            {actions.map(([a, w]) => <ActionButton key={a} $w={w}>{a}<Caret /></ActionButton>)}
          </Actions>
        </MenuBar>

        <TabStrip>
          {tabs.map((t, i) => (
            <Tab key={i} $active={i === 3}>
              <TabLabel>{t}</TabLabel>
              <TabClose aria-label={`${t} を閉じる`}><Cross /></TabClose>
            </Tab>
          ))}
          <PaneControls>
            <button aria-label="最大化"><svg width="10" height="8" viewBox="0 0 10 8" aria-hidden><rect x="2.500" y="2" width="5" height="4" fill="#fff" /><path d="M.5 2.500v-2h2M7.500.5h2v2M9.500 5.500v2h-2M2.500 7.500h-2v-2" fill="none" stroke="#fff" /></svg></button>
            <button aria-label="閉じる"><Cross s={8} /></button>
          </PaneControls>
        </TabStrip>

        <Content>
          <Toolbar>
            <Segment>
              <PairBox>
                <FlagUS /><FlagJP />
                <PlainSelect aria-label="通貨ペア" defaultValue="usdjpy"><option value="usdjpy">ドル/円</option></PlainSelect>
              </PairBox>
              <Button $w={12} aria-label="通貨ペアを選択"><Caret /></Button>
            </Segment>
            <FrameBox>
              <PlainSelect aria-label="足種" defaultValue="8h"><option value="8h">8時間足</option></PlainSelect>
              <Caret />
            </FrameBox>
            <Button $w={63}>テクニカル選択<Caret /></Button>
            <Button aria-label="描画"><svg width="10" height="10" viewBox="0 0 10 10" aria-hidden><path d="M1 9l1-3 5-5 2 2-5 5z" fill="#3c8fe4" /></svg></Button>
            <Button aria-label="情報"><svg width="9" height="9" viewBox="0 0 9 9" aria-hidden><circle cx="4.500" cy="4.500" r="4.200" fill="#2f86e6" /><path d="M4.500 2v1M4.500 4v3" stroke="#fff" strokeWidth="1.300" /></svg></Button>
            <Button aria-label="雲"><svg width="12" height="8" viewBox="0 0 12 8" fill="#f4f4f4" aria-hidden><path d="M0 7V4.500L2.500 3 4 3.500 5.500 1 8 3l2-.5 2 2V7z" /></svg></Button>
            <Segment>
              <Button $w={20} $on>Bid</Button>
              <Button $w={20}>Ask</Button>
            </Segment>
            <Button aria-label="チャート表示"><svg width="12" height="9" viewBox="0 0 12 9" fill="none" stroke="#4593e0" aria-hidden><path d="M.5.500h11M.5 8.500h11" strokeWidth=".8" /><path d="M1 6.500L3 3l1.500 3L6 2.500 7.500 6 9 3l2-1" strokeWidth="1.100" /></svg></Button>
            <Button aria-label="縮小"><Magnifier /></Button>
            <Button aria-label="拡大"><Magnifier plus /></Button>
          </Toolbar>

          <DrawBar>
            <ToolButton aria-label="十字線"><Glyph><path d="M6.500 1.500v10M1.500 6.500h10" /></Glyph></ToolButton>
            <DrawGroup>
              {tools.map((t) => <ToolButton key={t.name} $dim={t.dim} aria-label={t.name}><Glyph>{t.art}</Glyph></ToolButton>)}
            </DrawGroup>
          </DrawBar>

          <ChartPanel>
            <Chart />
            <DataWindow>
              <Handle />
              <DataTable>
                <colgroup><col width="13" /><col /><col width="60" /></colgroup>
                <tbody>
                  <Section title="2026/09/12 00:00" latest h={12} />
                  {ohlc.map(([k, v]) => <PriceRow key={k} $lit><td /><th scope="row">{k}</th><td>{v}</td></PriceRow>)}
                  <Section title="移動平均線" />
                  {averages.map(([c, k, v]) => <LabeledRow key={k} c={c} label={k} value={v} />)}
                  <Section title="ピークボトム [10]" />
                  <Section title="パラボリック [0.020]" />
                  {sar.map(([c, k, v]) => <LabeledRow key={k} c={c} label={k} value={v} />)}
                </tbody>
              </DataTable>
            </DataWindow>
          </ChartPanel>

          <FooterBar onSubmit={(e) => e.preventDefault()}>
            <label htmlFor="bars">本数:</label>
            <Gap $l={3} />
            <Field id="bars" $w={17} $small defaultValue="100" />
            <SmallButton $w={11} type="button" aria-label="減らす"><Caret /></SmallButton>
            <SmallButton $w={11} type="button" aria-label="増やす"><Caret up /></SmallButton>
            <Gap $l={3} $r={7}>本</Gap>
            <Field $w={52} defaultValue="2026/08/05" aria-label="開始日" />
            <SmallButton $w={14} type="button" aria-label="開始日を選択"><CalendarIcon /></SmallButton>
            <Gap $l={5} />
            <Field $w={29} defaultValue="00:00" aria-label="開始時刻" />
            <Gap $l={5} $r={5}>～</Gap>
            <Field $w={52} defaultValue="2026/09/12" aria-label="終了日" />
            <SmallButton $w={14} type="button" aria-label="終了日を選択"><CalendarIcon /></SmallButton>
            <Gap $l={5} />
            <Field $w={29} defaultValue="00:00" aria-label="終了時刻" />
            <Gap $l={6} />
            <SmallButton $w={17} aria-label="適用"><svg width="10" height="8" viewBox="0 0 10 8" fill="none" stroke="#fff" strokeWidth="1.600" aria-hidden><path d="M1 1.500h6a1.900 1.900 0 0 1 0 4H3M4.500 3.500l-2 2 2 2" /></svg></SmallButton>
          </FooterBar>
        </Content>
      </AppWindow>

      <TaskBar>
        <Weather>
          <svg width="16" height="16" viewBox="0 0 16 16" aria-hidden><path d="M8 .8L15.500 15H.5z" fill="#f3c41c" stroke="#f3c41c" strokeLinejoin="round" /><path d="M3.800 10.500a4.200 4.200 0 0 1 8.400 0h-3L7.500 13l.5-2.500z" fill="#3b3214" /></svg>
          <div>雷注意報<small>発令中</small></div>
        </Weather>
        <TaskCenter>
          <svg width="16" height="16" viewBox="0 0 16 16" aria-hidden><path d="M0 0h7.700v7.700H0z" fill="#2bb4f2" /><path d="M8.300 0H16v7.700H8.300z" fill="#1a9fe6" /><path d="M0 8.300h7.700V16H0z" fill="#1591de" /><path d="M8.300 8.300H16V16H8.300z" fill="#0a7ad0" /></svg>
          <SearchBox>
            <svg width="11" height="11" viewBox="0 0 11 11" fill="none" stroke="#222" strokeWidth="1.200" aria-hidden><circle cx="4.800" cy="4.800" r="3.800" /><path d="M7.600 7.600l3 3" /></svg>
            <input placeholder="検索" aria-label="検索" />
            <svg width="32" height="16" viewBox="0 0 32 16" aria-hidden>
              <defs><clipPath id="pill"><rect width="32" height="16" rx="7" /></clipPath></defs>
              <g clipPath="url(#pill)">
                <rect width="32" height="16" fill="#2b9cc8" /><path d="M0 0h24l-8 5H0z" fill="#8fd4ea" /><path d="M22 0h10v16H18z" fill="#1d6db4" />
                <path d="M0 13c6-2 10 0 20-1l-2 4H0z" fill="#3fb07c" />
                <path d="M2 9c4-1 6-5 12-5 4 0 6 2 7 4-4-1-5 1-8 2l-2 2-1-2c-3 0-5 1-7 2z" fill="#80603a" />
                <path d="M23 4h6M22 7h8M23 10h6" stroke="#7fd0ee" strokeDasharray="1 1.500" />
              </g>
            </svg>
          </SearchBox>
          <TaskIcons>
            {taskIcons.map((t) => (
              <TaskButton key={t.name} aria-label={t.name}><svg width="16" height="16" viewBox="0 0 16 16" aria-hidden>{t.art}</svg></TaskButton>
            ))}
            <TaskButton $active aria-label="MARKETSPEED FX">
              <svg width="17" height="24" viewBox="0 0 17 24" aria-hidden>
                <rect x=".5" y="4" width="16" height="16" rx="1.500" fill="#b01018" stroke="#6d0a0e" />
                <path d="M4 11v3M6.300 13v4M8.500 10v4M10.800 8v4M13 7v6" stroke="#fff" strokeWidth="1.400" />
                <path d="M4.500 23h8" stroke="#22808f" strokeWidth="1.600" />
              </svg>
            </TaskButton>
          </TaskIcons>
        </TaskCenter>
        <Tray>
          <svg width="7" height="5" viewBox="0 0 7 5" fill="none" stroke="#222" strokeWidth="1.100" aria-hidden><path d="M.7 4l2.800-3 2.800 3" /></svg>
          <svg width="14" height="12" viewBox="0 0 14 12" fill="none" stroke="#333" aria-hidden><path d="M3.500 11.500L7 1l3.500 10.500M4.700 8h4.600" /></svg>
          <svg width="11" height="9" viewBox="0 0 11 9" fill="none" stroke="#333" aria-hidden><path d="M.5 3a7 7 0 0 1 10 0M2.200 4.800a4.700 4.700 0 0 1 6.600 0M3.800 6.500a2.400 2.400 0 0 1 3.400 0" strokeWidth=".9" /><circle cx="5.500" cy="8" r=".8" fill="#333" stroke="none" /></svg>
          <svg width="10" height="9" viewBox="0 0 10 9" fill="none" stroke="#333" strokeWidth=".9" aria-hidden><path d="M.5 3h2L5 1v7L2.500 6h-2zM6.500 3a2 2 0 0 1 0 3M8 1.500a4 4 0 0 1 0 6" /></svg>
          <TrayClock>7:33<br />2026/09/12</TrayClock>
        </Tray>
      </TaskBar>
    </Screen>
  );
}
